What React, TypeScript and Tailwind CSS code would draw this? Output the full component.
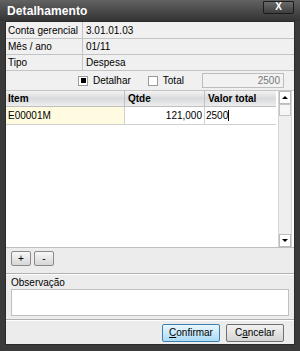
import React from 'react';

const font = { fontFamily: '"Liberation Sans", Arial, sans-serif' };

function InfoRow({ label, value, h }: { label: string; value: string; h: string }) {
  return (
    <div className={`flex ${h} border-b border-[#c4c4c4]`}>
      <div className="w-[77px] flex items-center pl-[2px] border-r border-[#c4c4c4]">{label}</div>
      <div className="flex-1 flex items-center pl-[3px]">{value}</div>
    </div>
  );
}

function Check({ checked, label }: { checked?: boolean; label: string }) {
  return (
    <div className="flex items-center gap-[5px]">
      <div className="w-[10px] h-[10px] border border-[#9a9a9a] bg-white flex items-center justify-center">
        {checked && <div className="w-[5px] h-[5px] bg-black" />}
      </div>
      <span>{label}</span>
    </div>
  );
}

export default function App() {
  return (
    <div style={font} className="w-[300px] h-[351px] bg-[#3a3a3a] text-[10px] text-black flex flex-col overflow-hidden">
      {/* title bar */}
      <div className="h-[21px] flex items-center justify-between pl-[7px] pr-[6px] bg-gradient-to-b from-[#626262] to-[#343434] shrink-0">
        <span className="text-white font-bold text-[12px] tracking-[0.1px]">Detalhamento</span>
        <div className="w-[31px] h-[13px] mb-[7px] rounded-b-[2px] border border-[#1c1c1c] bg-gradient-to-b from-[#6a6a6a] to-[#3e3e3e] flex items-center justify-center text-white font-bold text-[10px] leading-none">
          X
        </div>
      </div>

      {/* body */}
      <div className="flex-1 mx-[5px] mb-[6px] bg-[#ececec] flex flex-col border border-[#2a2a2a]">
        <div className="bg-[#f0f0f0]">
          <InfoRow label="Conta gerencial" value="3.01.01.03" h="h-[17px]" />
          <InfoRow label="Mês / ano" value="01/11" h="h-[16px]" />
          <InfoRow label="Tipo" value="Despesa" h="h-[16px]" />
          <div className="h-[20px] flex items-center border-b border-[#c4c4c4]">
            <div className="ml-[72px] flex items-center gap-[17px]">
              <Check checked label="Detalhar" />
              <Check label="Total" />
            </div>
            <div className="ml-auto mr-[10px] w-[82px] h-[15px] border border-[#bdbdbd] bg-[#f2f2f2] text-[#777] flex items-center justify-end pr-[3px]">
              2500
            </div>
          </div>
        </div>

        {/* grid */}
        <div className="flex h-[157px] bg-white border-b border-[#bdbdbd]">
          <div className="flex-1 flex flex-col">
            <div className="flex h-[16px] font-bold bg-gradient-to-b from-[#f4f4f4] via-[#d8dadc] to-[#eeeeee] border-b border-[#c0c0c0]">
              <div className="w-[119px] pl-[2px] flex items-center border-r border-[#c0c0c0]">Item</div>
              <div className="w-[80px] pl-[3px] flex items-center border-r border-[#c0c0c0]">Qtde</div>
              <div className="flex-1 pl-[3px] flex items-center">Valor total</div>
            </div>
            <div className="flex h-[18px] border-b border-[#d0d0d0]">
              <div className="w-[119px] pl-[2px] flex items-center bg-[#fffbe0] border-r border-[#d0d0d0]">E00001M</div>
              <div className="w-[80px] pr-[2px] flex items-center justify-end border-r border-[#d0d0d0]">121,000</div>
              <div className="flex-1 pl-[1px] flex items-center">
                2500<span className="w-px h-[11px] bg-black" />
              </div>
            </div>
          </div>
          <div className="w-[14px] ml-[2px] mr-[2px] flex flex-col bg-[#efefef] border-x border-[#d4d4d4]">
            <div className="h-[13px] bg-white border border-[#bcbcbc] flex items-center justify-center">
              <div className="w-0 h-0 border-x-[3px] border-x-transparent border-b-[3px] border-b-black" />
            </div>
            <div className="h-[12px] bg-[#f6f6f6] border border-[#c4c4c4]" />
            <div className="flex-1" />
            <div className="h-[13px] bg-white border border-[#bcbcbc] flex items-center justify-center">
              <div className="w-0 h-0 border-x-[3px] border-x-transparent border-t-[3px] border-t-black" />
            </div>
          </div>
        </div>

        {/* +/- */}
        <div className="flex gap-[3px] px-[5px] pt-[3px] h-[26px] border-b border-[#b0b0b0]">
          <div className="w-[20px] h-[15px] rounded-[2px] border border-[#8a8a8a] bg-gradient-to-b from-[#f8f8f8] to-[#d6d6d6] flex items-center justify-center text-[10px] leading-none">+</div>
          <div className="w-[20px] h-[15px] rounded-[2px] border border-[#8a8a8a] bg-gradient-to-b from-[#f8f8f8] to-[#d6d6d6] flex items-center justify-center text-[10px] leading-none">-</div>
        </div>

        {/* observação */}
        <div className="px-[5px] pt-[2px] pb-[3px] border-b border-[#b0b0b0] border-t border-t-white">
          <div className="leading-[12px]">Observação</div>
          <div className="h-[27px] bg-white border border-[#c0c0c0]" />
        </div>

        {/* buttons */}
        <div className="flex-1 flex items-center justify-end gap-[6px] pr-[10px] border-t border-white">
          <div className="w-[58px] h-[18px] rounded-[2px] border border-[#3c7fb1] bg-gradient-to-b from-[#e9f6fd] to-[#a9dbf6] flex items-center justify-center">
            <span><span className="underline">C</span>onfirmar</span>
          </div>
          <div className="w-[58px] h-[18px] rounded-[2px] border border-[#707070] bg-gradient-to-b from-[#f2f2f2] to-[#d4d4d4] flex items-center justify-center">
            <span>C<span className="underline">a</span>ncelar</span>
          </div>
        </div>
      </div>
    </div>
  );
}
